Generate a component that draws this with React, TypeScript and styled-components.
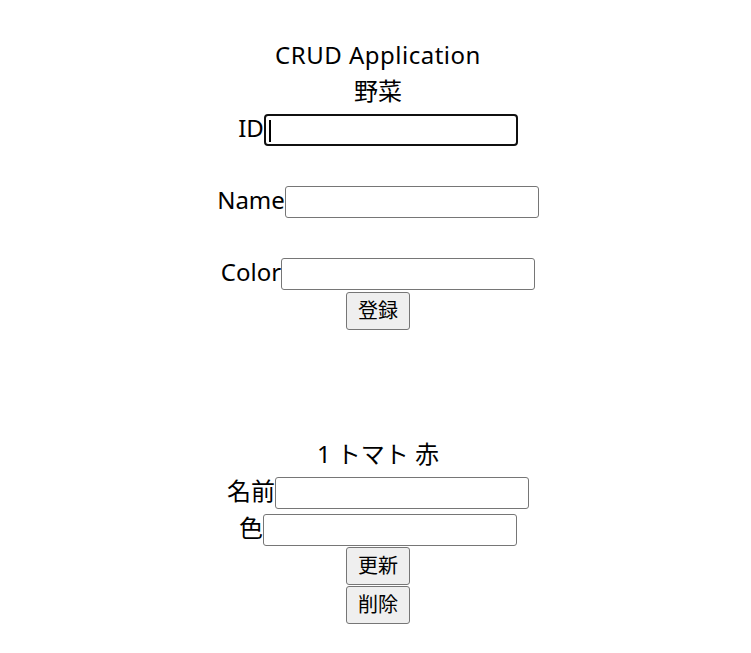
import React from "react";
import styled, { createGlobalStyle } from "styled-components";

const Global = createGlobalStyle`
  html, body { margin: 0; padding: 0; background: #fff; }
  body {
    font-family: "Noto Sans", "Noto Sans CJK JP", sans-serif;
    color: #000;
  }
`;

const Page = styled.div`
  display: flex;
  flex-direction: column;
  align-items: center;
  padding: 37px 0 0 5px;
  font-size: 24px;
`;

const Line = styled.div<{ $mt?: number; $ls?: number }>`
  height: 36px;
  line-height: 36px;
  margin-top: ${(p) => p.$mt ?? 0}px;
  letter-spacing: ${(p) => p.$ls ?? 0}px;
  white-space: pre;
`;

const Row = styled.div<{ $mt?: number; $h?: number }>`
  display: flex;
  align-items: center;
  height: ${(p) => p.$h ?? 36}px;
  margin-top: ${(p) => p.$mt ?? 0}px;
`;

const Label = styled.label`
  font-size: 24px;
  line-height: 1;
  padding-bottom: 4px;
`;

const FieldWrap = styled.div`
  position: relative;
  display: flex;
`;

const Caret = styled.span`
  position: absolute;
  left: 5px;
  top: 6px;
  width: 2px;
  height: 22px;
  background: #000;
`;

const Field = styled.input<{ $focused?: boolean }>`
  box-sizing: border-box;
  width: 254px;
  height: 32px;
  margin: 0;
  padding: 1px 4px;
  font-size: 20px;
  font-family: "Noto Sans", "Noto Sans CJK JP", sans-serif;
  background: #fff;
  border: ${(p) => (p.$focused ? "2px solid #101010" : "1px solid #767676")};
  border-radius: ${(p) => (p.$focused ? 4 : 3)}px;
  outline: none;
  caret-color: transparent;
`;

const Button = styled.button<{ $mt?: number }>`
  box-sizing: border-box;
  width: 64px;
  height: 38px;
  margin: ${(p) => p.$mt ?? 0}px 0 0 0;
  padding: 0 0 3px 0;
  font-size: 20px;
  font-family: "Noto Sans CJK JP", sans-serif;
  color: #000;
  background: #efefef;
  border: 1px solid #767676;
  border-radius: 3px;
`;

export default function App() {
  return (
    <>
      <Global />
      <Page>
        <Line $ls={0.5}>CRUD Application</Line>
        <Line>野菜</Line>
        <Row $mt={3}>
          <Label>ID</Label>
          <FieldWrap>
            <Field $focused />
            <Caret />
          </FieldWrap>
        </Row>
        <Row $mt={35.5}>
          <Label>Name</Label>
          <Field />
        </Row>
        <Row $mt={36}>
          <Label>Color</Label>
          <Field />
        </Row>
        <Button>登録</Button>
        <Line $mt={106}>1 トマト 赤</Line>
        <Row $mt={4.5} $h={34}>
          <Label>名前</Label>
          <Field />
        </Row>
        <Row $mt={3} $h={34}>
          <Label>色</Label>
          <Field />
        </Row>
        <Button>更新</Button>
        <Button $mt={1}>削除</Button>
      </Page>
    </>
  );
}
